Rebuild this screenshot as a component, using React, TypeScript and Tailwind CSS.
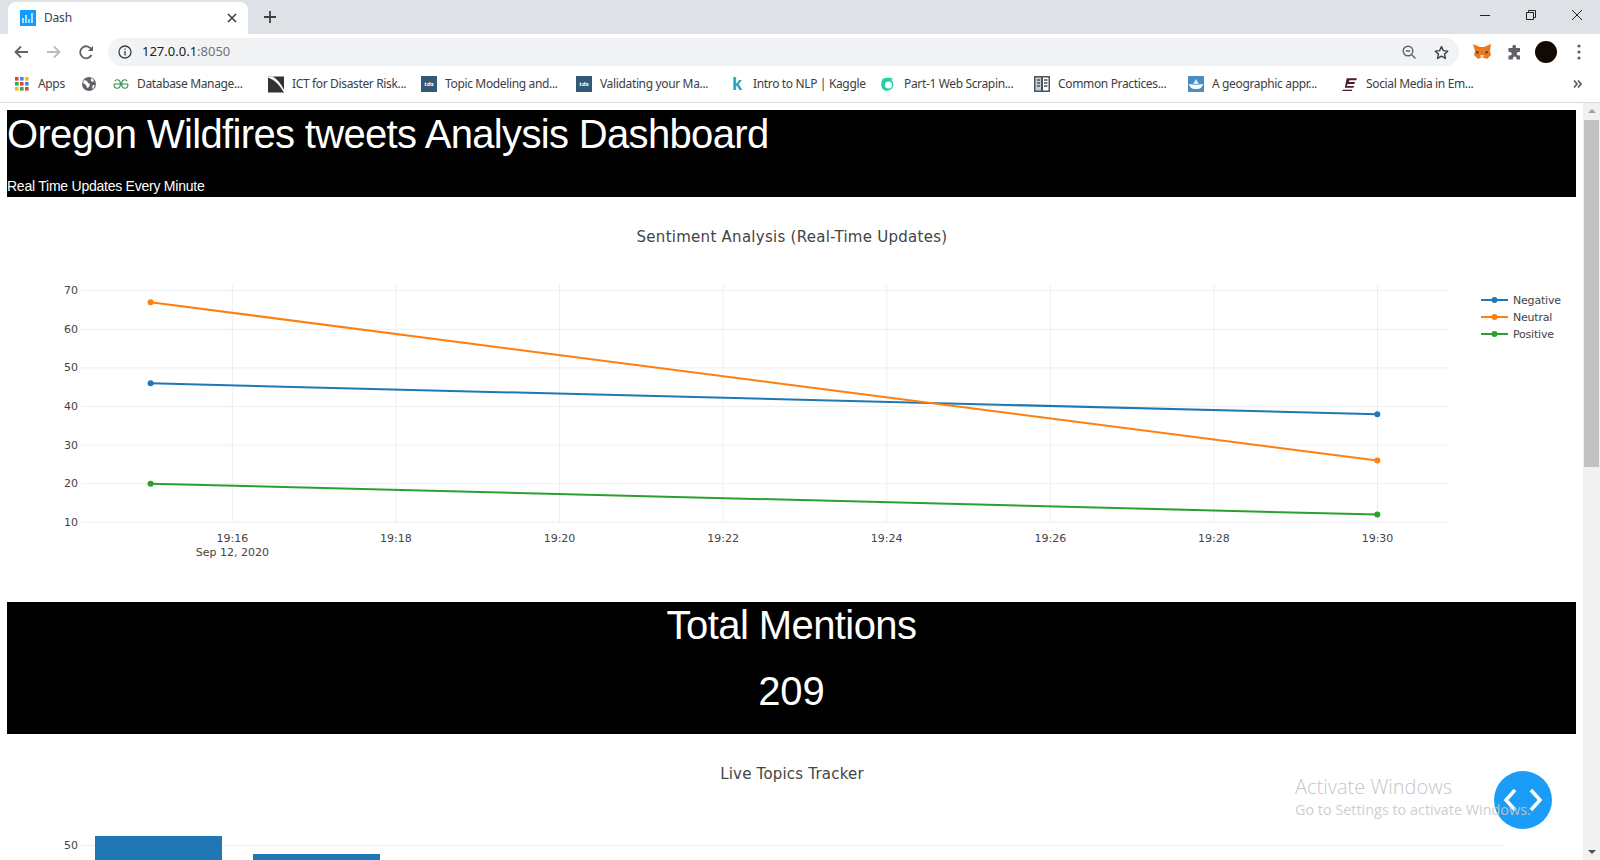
import React from "react";

const ui = "font-['Noto_Sans','Open_Sans',sans-serif]";

function Grid() {
  const c = ["#ea4335", "#4285f4", "#fbbc05", "#34a853", "#ea4335", "#4285f4", "#fbbc05", "#34a853", "#ea4335"];
  return (
    <svg width="16" height="16" viewBox="0 0 16 16">
      {c.map((f, i) => (
        <rect key={i} x={1 + (i % 3) * 5} y={1 + Math.floor(i / 3) * 5} width="3.6" height="3.6" fill={f} />
      ))}
    </svg>
  );
}
const Globe = () => (
  <svg width="16" height="16" viewBox="0 0 16 16">
    <circle cx="8" cy="8" r="7" fill="#5f6368" />
    <path d="M3 4l3 1 1 2 2 1-1 3-2 1-1-3-3-2zM10 2l3 2-1 2-2-1zM12 9l2 0-2 4-1-1z" fill="#fff" />
  </svg>
);
const GG = () => (
  <svg width="16" height="16" viewBox="0 0 16 16" fill="none" stroke="#2f8d46" strokeWidth="1.1">
    <path d="M1 8h14M14.300 5.200C13.600 4.200 12.800 3.800 12 3.800 10 3.800 8.600 5.600 8.600 8S10 12.200 12 12.200C13.800 12.200 15 10.600 15 8M1.700 5.200C2.400 4.200 3.200 3.800 4 3.800 6 3.800 7.400 5.600 7.400 8S6 12.200 4 12.200C2.200 12.200 1 10.600 1 8" />
  </svg>
);
const Ict = () => (
  <svg width="17" height="17" viewBox="0 0 17 17">
    <rect width="17" height="17" fill="#333" />
    <path d="M0 0h5c5 3 9 8 12 14v3C13 10 8 4 0 1z" fill="#fff" />
  </svg>
);
const Tds = () => (
  <div className="flex h-4 w-4 items-center justify-center bg-[#355876] text-[6px] font-bold leading-none text-white">tds</div>
);
const K = () => (
  <div className="flex h-4 w-4 items-center justify-center font-['Liberation_Sans',sans-serif] text-[18px] font-bold leading-none text-[#20a0c8]">k</div>
);
const Ring = () => (
  <svg width="17" height="17" viewBox="0 0 17 17">
    <path d="M3 2.500C6 1 12 .5 15 3c-2-.5-3 0-3.500.5 3 1.500 3.500 6 1.500 9-2 2.500-6 3.500-8.500 2C1 13 0 7 3 2.500z" fill="#1fd3a6" />
    <circle cx="9" cy="9" r="3.800" fill="#fff" />
  </svg>
);
const Book = () => (
  <svg width="16" height="16" viewBox="0 0 16 16">
    <rect width="16" height="16" fill="#4a5560" />
    <rect x="1.500" y="1.500" width="5.500" height="13" fill="#c8cdd2" />
    <rect x="9" y="1.500" width="5.500" height="13" fill="#fff" />
    <path d="M10 4h3.500M10 7h3.500M10 10h3.500M3 4h3M3 7h3M3 10h3" stroke="#4a5560" strokeWidth="1.300" />
  </svg>
);
const Ship = () => (
  <svg width="16" height="16" viewBox="0 0 16 16">
    <rect width="16" height="16" fill="#4a8cc4" />
    <path d="M1 8c4 1 10 1 14 0-1 4-3 5-7 5S2 12 1 8z" fill="#fff" />
    <path d="M5 8l3-5 3 5z" fill="#dbe9f5" />
  </svg>
);
const E = () => (
  <svg width="17" height="16" viewBox="0 0 17 16">
    <path d="M5 2h11l-1 2H8L7 6h7l-1 2H6L5 10h8l-1 2H3zM1 14h10l-.5 1.500H0z" fill="#4e1a30" />
  </svg>
);
const Fox = () => (
  <svg width="18" height="16" viewBox="0 0 18 16">
    <path d="M0 0l7 3h4l7-3-1 7 1 4-4 4-2-1H7l-2 1-4-4 1-4z" fill="#e8791f" />
    <path d="M3 7l3 1-2 2zM15 7l-3 1 2 2z" fill="#3b2a20" />
    <path d="M7 11h4l-1 3H8z" fill="#f2d5bd" />
  </svg>
);

function Mark({ className, icon, text }: { className: string; icon: React.ReactNode; text: string }) {
  return (
    <div className={`flex shrink-0 items-center gap-[8px] ${className}`}>
      <div className="flex w-4 shrink-0 items-center justify-center">{icon}</div>
      <span className="whitespace-nowrap tracking-[-0.35px]">{text}</span>
    </div>
  );
}

function Chrome() {
  return (
    <div className={`shrink-0 ${ui}`}>
      <div className="flex h-[34px] items-end bg-[#dee1e6]">
        <div className="ml-[8px] flex h-[32px] w-[240px] items-center rounded-t-[8px] bg-white pl-[12px] pr-[11px]">
          <svg width="16" height="16" viewBox="0 0 16 16">
            <rect width="16" height="16" fill="#119dff" />
            <path d="M3 8v5M6 5v8M9 9v4M12 3v10" stroke="#fff" strokeWidth="1.300" />
          </svg>
          <span className="ml-[8px] flex-1 text-[12px] tracking-[-0.2px] text-[#3c4043]">Dash</span>
          <svg width="10" height="10" viewBox="0 0 10 10" stroke="#3c4043" strokeWidth="1.600">
            <path d="M1 1l8 8M9 1l-8 8" />
          </svg>
        </div>
        <svg className="mb-[10px] ml-[15px]" width="14" height="14" viewBox="0 0 14 14" stroke="#3c4043" strokeWidth="1.800">
          <path d="M7 1v12M1 7h12" />
        </svg>
        <div className="mb-[14px] ml-auto flex items-center gap-[36px] pr-[18px]">
          <svg width="10" height="10" viewBox="0 0 10 10" stroke="#222"><path d="M0 5.500h10" /></svg>
          <svg width="10" height="10" viewBox="0 0 10 10" fill="none" stroke="#222">
            <path d="M.5 2.500h7v7h-7zM2.500 2.500v-2h7v7h-2" />
          </svg>
          <svg width="10" height="10" viewBox="0 0 10 10" stroke="#222"><path d="M0 0l10 10M10 0L0 10" /></svg>
        </div>
      </div>
      <div className="box-border flex h-[32px] items-center bg-white pl-[14px] pt-[4px]">
        <svg width="14" height="14" viewBox="0 0 14 14" fill="none" stroke="#5f6368" strokeWidth="1.800">
          <path d="M14 7H2M7 1.500L1.500 7 7 12.500" />
        </svg>
        <svg className="ml-[19px]" width="14" height="14" viewBox="0 0 14 14" fill="none" stroke="#b8babd" strokeWidth="1.800">
          <path d="M0 7h12M7 1.500L12.500 7 7 12.500" />
        </svg>
        <svg className="ml-[18px]" width="15" height="15" viewBox="0 0 15 15" fill="none" stroke="#5f6368" strokeWidth="1.800">
          <path d="M12.500 10a6 6 0 1 1 .2-5" />
          <path d="M14 1v5H9z" fill="#5f6368" stroke="none" />
        </svg>
        <div className="ml-[14px] flex h-[28px] w-[1351px] items-center rounded-full bg-[#f1f3f4] pl-[10px] pr-[10px]">
          <svg width="14" height="14" viewBox="0 0 14 14" fill="none" stroke="#3c4043" strokeWidth="1.300">
            <circle cx="7" cy="7" r="6" />
            <path d="M7 6v4.500M7 3.500v1.300" />
          </svg>
          <span className="ml-[10px] text-[13px] text-[#202124]">
            127.0.0.1<span className="text-[#6f7377]">:8050</span>
          </span>
          <div className="ml-auto flex items-center gap-[18px]">
            <svg width="14" height="14" viewBox="0 0 14 14" fill="none" stroke="#5f6368" strokeWidth="1.400">
              <circle cx="6" cy="6" r="4.800" />
              <path d="M9.500 9.500L13.500 13.500M3.800 6h4.400" />
            </svg>
            <svg width="15" height="15" viewBox="0 0 24 24" fill="none" stroke="#3c4043" strokeWidth="2.200" strokeLinejoin="round">
              <path d="M12 2.500l3 6.500 7 .8-5.200 4.700 1.500 7L12 17.900 5.700 21.500l1.500-7L2 9.800 9 9z" />
            </svg>
          </div>
        </div>
        <div className="ml-[14px] flex items-center">
          <Fox />
          <svg className="ml-[16px]" width="15" height="15" viewBox="0 0 15 15">
            <path d="M5.500 1.500a1.700 1.700 0 0 1 3.400 0V3H13v4h-1.500a1.800 1.800 0 0 0 0 3.600H13V14.500H9.500v-1.300a1.800 1.800 0 0 0-3.600 0v1.300H1.500V10.500H3a1.800 1.800 0 0 0 0-3.600H1.500V3h4z" fill="#5f6368" />
          </svg>
          <div className="ml-[13px] h-[22px] w-[22px] rounded-full bg-[#120a02]" />
          <svg className="ml-[20px]" width="4" height="16" viewBox="0 0 4 16" fill="#5f6368">
            <circle cx="2" cy="2" r="1.600" />
            <circle cx="2" cy="8" r="1.600" />
            <circle cx="2" cy="14" r="1.600" />
          </svg>
        </div>
      </div>
      <div className="flex h-[37px] items-center border-b border-[#dadce0] bg-white pl-[14px] text-[12px] text-[#3c4043]">
        <Mark className="w-[67px]" icon={<Grid />} text="Apps" />
        <Mark className="w-[32px]" icon={<Globe />} text="" />
        <Mark className="w-[155px]" icon={<GG />} text="Database Manage..." />
        <Mark className="w-[153px]" icon={<Ict />} text="ICT for Disaster Risk..." />
        <Mark className="w-[155px]" icon={<Tds />} text="Topic Modeling and..." />
        <Mark className="w-[153px]" icon={<Tds />} text="Validating your Ma..." />
        <Mark className="w-[151px]" icon={<K />} text="Intro to NLP | Kaggle" />
        <Mark className="w-[154px]" icon={<Ring />} text="Part-1 Web Scrapin..." />
        <Mark className="w-[154px]" icon={<Book />} text="Common Practices..." />
        <Mark className="w-[154px]" icon={<Ship />} text="A geographic appr..." />
        <Mark className="w-[231px]" icon={<E />} text="Social Media in Em..." />
        <svg width="9" height="8" viewBox="0 0 9 8" fill="none" stroke="#5f6368" strokeWidth="1.800">
          <path d="M1 .5L4 4 1 7.500M5 .5L8 4 5 7.500" />
        </svg>
      </div>
    </div>
  );
}

const T = "font-['DejaVu_Sans',Verdana,sans-serif]";

function y1(v: number) {
  return 522.3 - (v - 10) * 3.86;
}
const x0 = 150.6;
const x1 = 1377.3;

function LineChart() {
  const xt = ["19:16", "19:18", "19:20", "19:22", "19:24", "19:26", "19:28", "19:30"];
  const series = [
    { c: "#1f77b4", a: 46, b: 38, n: "Negative", ly: 300 },
    { c: "#ff7f0e", a: 67, b: 26, n: "Neutral", ly: 317 },
    { c: "#2ca02c", a: 20, b: 12, n: "Positive", ly: 334 },
  ];
  return (
    <svg className={`block h-[405px] w-[1569px] ${T}`} viewBox="7 197 1569 405">
      <text x="792" y="242" textAnchor="middle" fontSize="15" letterSpacing="0.27" fill="#444">Sentiment Analysis (Real-Time Updates)</text>
      {xt.map((t, i) => {
        const x = 232.3 + i * 163.6;
        return (
          <g key={t}>
            <line x1={x} x2={x} y1="285" y2="522" stroke="#eeeeee" />
            <text x={x} y="542" textAnchor="middle" fontSize="11" fill="#444">{t}</text>
          </g>
        );
      })}
      <text x="232.300" y="556" textAnchor="middle" fontSize="11" fill="#444">Sep 12, 2020</text>
      {[10, 20, 30, 40, 50, 60, 70].map((v) => (
        <g key={v}>
          <line x1="81" x2="1449" y1={y1(v)} y2={y1(v)} stroke="#eeeeee" />
          <text x="78" y={y1(v) + 3.5} textAnchor="end" fontSize="11" fill="#444">{v}</text>
        </g>
      ))}
      {series.map((s) => (
        <g key={s.n}>
          <line x1={x0} y1={y1(s.a)} x2={x1} y2={y1(s.b)} stroke={s.c} strokeWidth="2" />
          <circle cx={x0} cy={y1(s.a)} r="3" fill={s.c} />
          <circle cx={x1} cy={y1(s.b)} r="3" fill={s.c} />
          <line x1="1481" x2="1508" y1={s.ly} y2={s.ly} stroke={s.c} strokeWidth="2" />
          <circle cx="1494.500" cy={s.ly} r="3" fill={s.c} />
          <text x="1513" y={s.ly + 4} fontSize="11" letterSpacing="-0.2" fill="#444">{s.n}</text>
        </g>
      ))}
    </svg>
  );
}

function BarChart() {
  return (
    <svg className={`block h-[126px] w-[1569px] ${T}`} viewBox="7 734 1569 126">
      <text x="792" y="779" textAnchor="middle" fontSize="15" letterSpacing="0.2" fill="#444">Live Topics Tracker</text>
      <line x1="81" x2="1504" y1="845.500" y2="845.500" stroke="#eeeeee" />
      <text x="78" y="849" textAnchor="end" fontSize="11" fill="#444">50</text>
      <rect x="95" y="836" width="127" height="30" fill="#1f77b4" />
      <rect x="253" y="854" width="127" height="12" fill="#1f77b4" />
    </svg>
  );
}

export default function App() {
  return (
    <div className="relative flex h-[860px] w-[1600px] flex-col overflow-hidden bg-white">
      <Chrome />
      <div className="flex min-h-0 flex-1">
        <main className="w-[1583px] overflow-hidden pl-[7px] pr-[7px] pt-[7px] font-['Liberation_Sans',Arial,sans-serif] text-white">
          <div className="h-[87px] w-[1569px] bg-black">
            <h1 className="text-[40px] leading-[48px] tracking-[-0.66px]">Oregon Wildfires tweets Analysis Dashboard</h1>
            <p className="mt-[20px] text-[14px] leading-[16px] tracking-[-0.24px]">Real Time Updates Every Minute</p>
          </div>
          <LineChart />
          <div className="flex h-[132px] w-[1569px] flex-col items-center bg-black text-[40px]">
            <div className="leading-[46px] tracking-[-0.58px]">Total Mentions</div>
            <div className="mt-[19px] leading-[48px]">209</div>
          </div>
          <BarChart />
        </main>
        <div className="flex w-[17px] flex-col items-center bg-[#f1f1f1]">
          <div className="mt-[6px] h-0 w-0 border-x-[4px] border-b-[4px] border-x-transparent border-b-[#a3a3a3]" />
          <div className="mt-[7px] h-[347px] w-[15px] bg-[#c1c1c1]" />
          <div className="mt-auto mb-[6px] h-0 w-0 border-x-[4px] border-t-[4px] border-x-transparent border-t-[#505050]" />
        </div>
      </div>
      <button className="absolute left-[1494px] top-[771px] flex h-[58px] w-[58px] items-center justify-center rounded-full bg-[#1b9cf7]">
        <svg width="40" height="26" viewBox="0 0 40 26" fill="none" stroke="#fff" strokeWidth="3.500">
          <path d="M12 3L3 13l9 10M28 3l9 10-9 10" />
        </svg>
      </button>
      <div className="pointer-events-none absolute left-[1295px] top-[773px] font-['Open_Sans',sans-serif]">
        <div className="text-[20px] font-light leading-[28px] text-[#bebebe]/90">Activate Windows</div>
        <div className="text-[14.4px] leading-[18px] text-[#c8c8c8]/90">Go to Settings to activate Windows.</div>
      </div>
    </div>
  );
}
